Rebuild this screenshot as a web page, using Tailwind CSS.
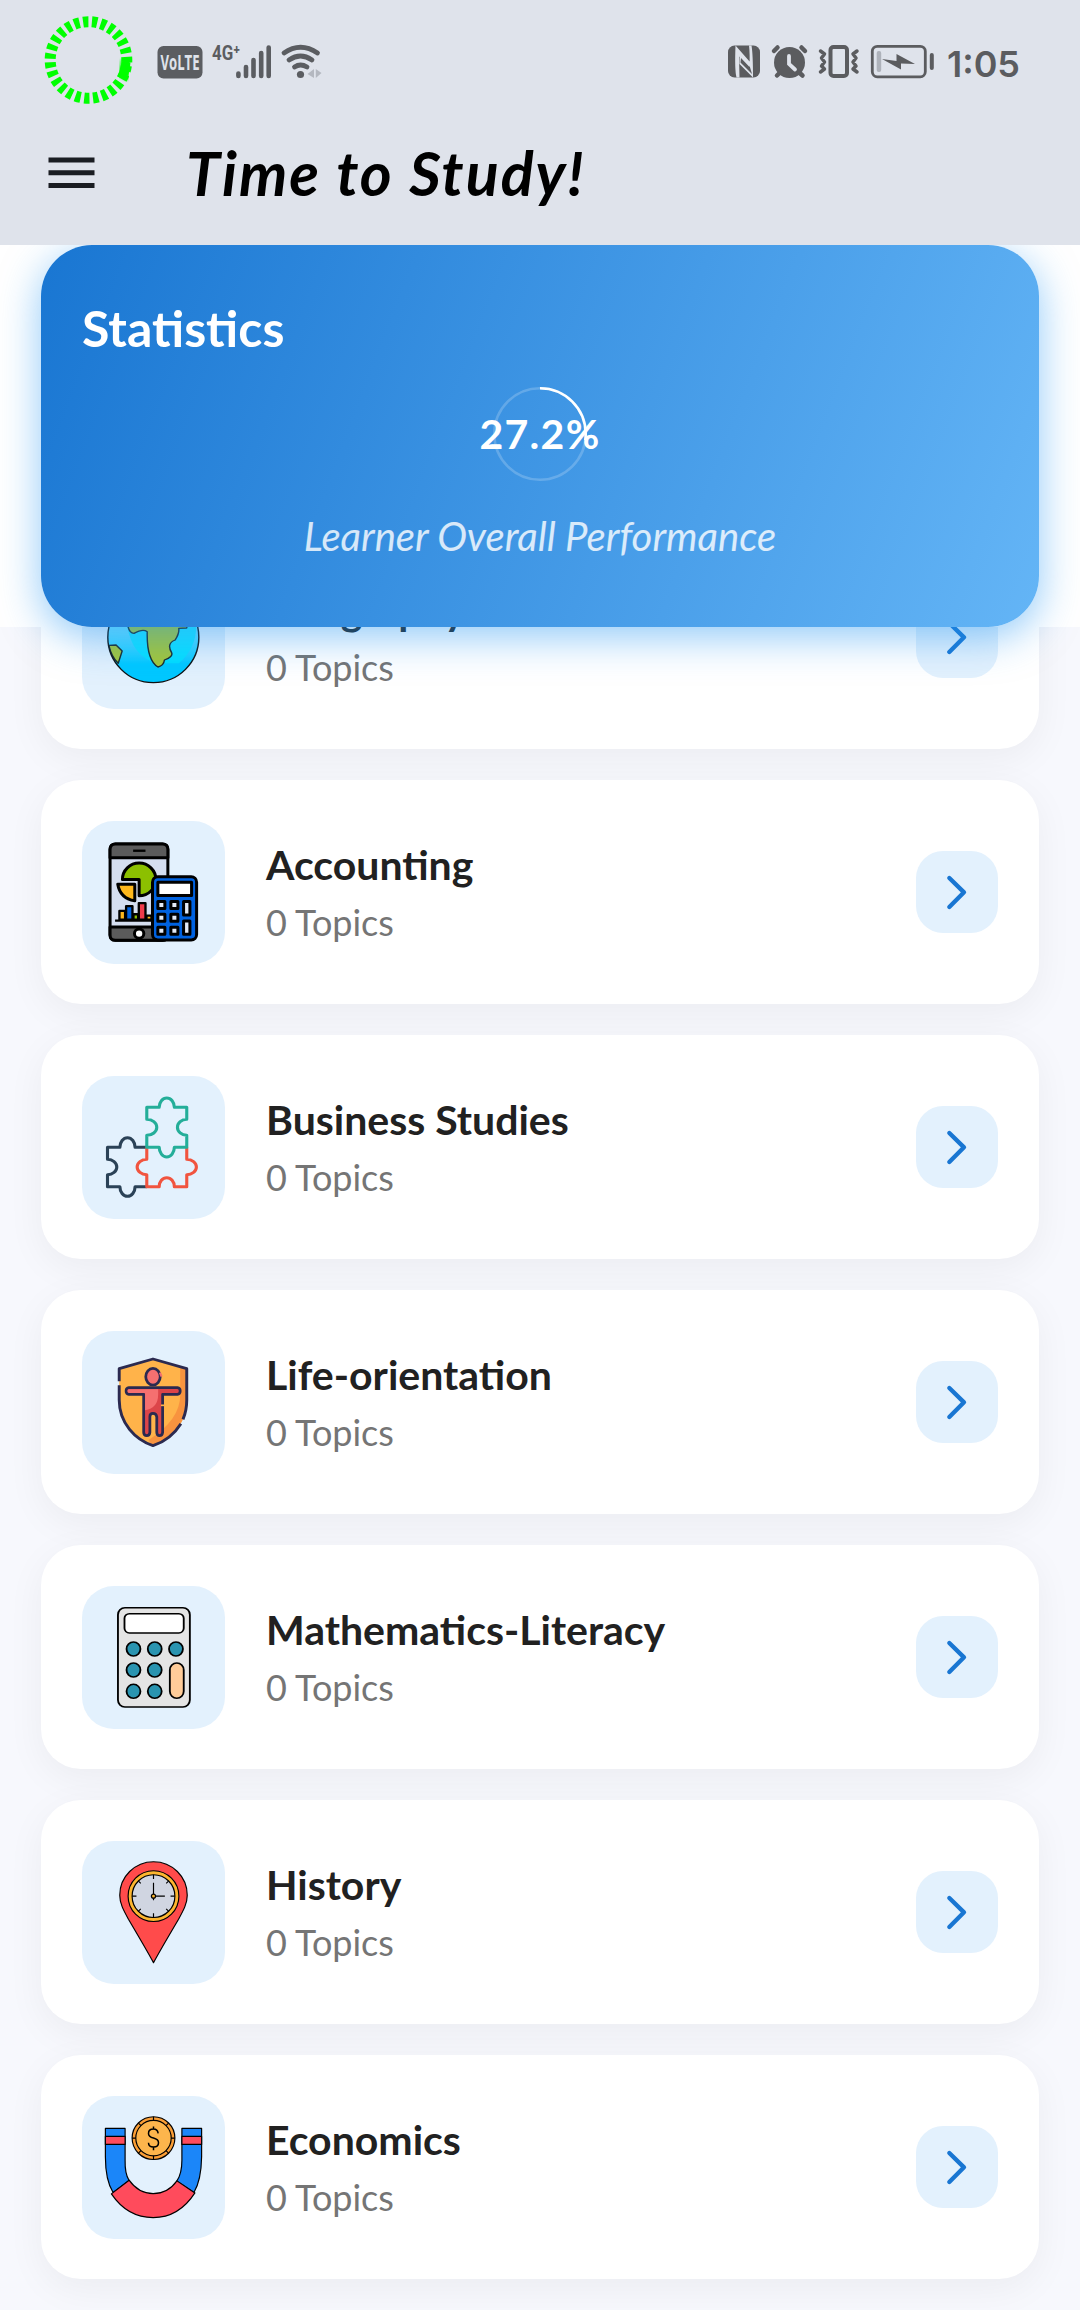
<!DOCTYPE html>
<html lang="en">
<head>
<meta charset="utf-8">
<title>Time to Study!</title>
<script src="https://cdn.jsdelivr.net/npm/@tailwindcss/browser@4"></script>
</head>
<body class="w-[1080px] h-[2310px] overflow-hidden bg-white font-[Lato,sans-serif] flex flex-col">
<svg class="hidden">
  <symbol id="chevron" viewBox="171 348 246 246"><path d="M271 429L315 472L271 516" fill="none" stroke="#1976d2" stroke-width="13" stroke-linecap="round" stroke-linejoin="round"/></symbol>
</svg>

<header class="relative z-20 h-[245px] shrink-0 bg-[#dfe3eb]">
  <div class="flex h-[120px] items-center justify-between">
    <svg class="h-[120px] w-[340px]" viewBox="0 0 340 120">
      <defs><filter id="soft" x="-50%" y="-50%" width="200%" height="200%"><feGaussianBlur stdDeviation="1.6"/></filter></defs>
      <circle cx="88.5" cy="60" r="38.3" fill="none" stroke="#00ff00" stroke-width="11" pathLength="270" stroke-dasharray="6 4" stroke-dashoffset="3.6"/>
      <path d="M126.5 60Q126 70 122 78" fill="none" stroke="#00ff00" stroke-width="11" filter="url(#soft)"/>
      <path d="M126 62Q125.500 70 122.500 76" fill="none" stroke="#00ff00" stroke-width="9"/>
      <rect x="157.500" y="46" width="45" height="32.500" rx="6" fill="#5b5d61"/>
      <text x="160.500" y="69.700" textLength="39" lengthAdjust="spacingAndGlyphs" font-family="Open Sans" font-weight="700" font-size="21" fill="#dfe3eb">VoLTE</text>
      <text x="212" y="60" textLength="28" lengthAdjust="spacingAndGlyphs" font-family="Roboto" font-weight="700" font-size="20" fill="#5b5d61">4G⁺</text>
      <g stroke="#5b5d61" stroke-width="4.600" stroke-linecap="round" fill="none">
        <path d="M238.400 73.500V76M246 67V76M253.500 60V76M261.200 53V76M268.700 47.500V76"/>
        <path d="M284 53Q300.500 41.500 317.500 53M289 60Q300.500 52 312 60M294.500 67Q300.500 63 307 67" stroke-width="4.800"/>
      </g>
      <circle cx="300.500" cy="74.500" r="3.600" fill="#5b5d61"/>
      <path d="M314 69V78L307.500 74ZM315.800 69V78L321.500 73Z" fill="#b4b8c0"/>
    </svg>
    <svg class="h-[120px] w-[360px]" viewBox="720 0 360 120">
      <g fill="#5b5c5f">
        <rect x="728" y="45.500" width="32" height="32" rx="6.500"/>
        <path d="M735.500 45.500L750 62V68L739 56.500L739.500 77.500H736.500Q734.500 70 735.500 45.500ZM749 45.500H751.500Q753 54 753 77.500L739.500 64V55L749.500 65.500Q750 54 749 45.500Z" fill="#dfe3eb"/>
        <path d="M741 58L749.500 67V65.500L752 74L740.500 62.500Z" fill="#5b5c5f"/>
        <circle cx="789.500" cy="62.500" r="15.500"/>
        <path d="M774 51L777.500 47.500M805 51L801.500 47.500M777 75.500L781 71.500M802.500 75.500L798 71.500" stroke="#5b5c5f" stroke-width="4.500" stroke-linecap="round"/>
        <path d="M789 56V64L795 69.500" fill="none" stroke="#dfe3eb" stroke-width="3.800" stroke-linecap="round"/>
      </g>
      <g fill="none" stroke="#5b5c5f" stroke-width="4">
        <rect x="830.500" y="47" width="16.500" height="29" rx="3"/>
        <path d="M820.500 51L824.500 54L821.500 58L824.500 62L821.500 66L824.500 69L820.500 72M857 51L853 54L856 58L853 62L856 66L853 69L857 72" stroke-width="3.500" stroke-linecap="round" stroke-linejoin="round"/>
        <rect x="872.300" y="46.300" width="53" height="30.500" rx="5" stroke-width="2.800"/>
        <path d="M931.800 55V68" stroke-linecap="round"/>
      </g>
      <rect x="876.700" y="51" width="4.500" height="21" rx="2" fill="#aeb2ba"/>
      <path d="M882 59L896.500 61V54L915 64L901 63.500V69.500Z" fill="#5b5c5f"/>
      <text x="947" y="76.500" textLength="73" font-family="Inter" font-weight="600" font-size="36" fill="#5b5c5f">1:05</text>
    </svg>
  </div>
  <div class="flex h-[106px] items-center">
    <svg class="ml-12 h-[32px] w-[47px]" viewBox="0 0 47 32"><path d="M.5 3H46.500M.5 15.700H46.500M.5 28.400H46.500" stroke="#1a1d22" stroke-width="5"/></svg>
    <h1 class="ml-[91px] text-[61px] leading-[80px] font-bold italic tracking-[2px] whitespace-nowrap text-black font-[Lato,cursive]">Time to Study!</h1>
  </div>
</header>

<section class="relative z-10 mx-[41px] flex h-[382px] shrink-0 flex-col rounded-[51px] bg-[linear-gradient(110.950deg,#1976d2,#64b5f6)] px-[41px] pt-[53px] text-white shadow-[0_10px_40px_rgba(33,150,243,0.500)]">
  <h2 class="text-[50px] leading-[60px] font-bold">Statistics</h2>
  <div class="mt-[28px] grid h-[96px] place-items-center">
    <svg class="col-start-1 row-start-1 size-[96px]" viewBox="0 0 96 96">
      <circle cx="48" cy="48" r="45.700" fill="none" stroke="#fff" stroke-opacity=".2" stroke-width="2.600"/>
      <circle cx="48" cy="48" r="45.700" fill="none" stroke="#fff" stroke-width="2.600" pathLength="100" stroke-dasharray="27.200 100" transform="rotate(-90 48 48)"/>
    </svg>
    <span class="col-start-1 row-start-1 text-[41px] leading-[50px] font-bold tracking-[1.300px]">27.2%</span>
  </div>
  <p class="mt-[24px] text-center text-[40px] leading-[60px] italic whitespace-nowrap text-white/80 font-[Lato,cursive]">Learner Overall Performance</p>
</section>

<main class="flex h-[1683px] flex-col gap-[31px] overflow-hidden bg-[#f7f8fd] px-[41px]">
  <article class="-mt-[102px] flex h-[224px] shrink-0 items-center rounded-[40px] bg-white px-[41px] shadow-[0_10px_38px_rgba(0,0,0,0.050)]">
    <div class="size-[143px] shrink-0 rounded-[32px] bg-[#e3f1fd]">
      <svg class="size-full" viewBox="230 978 399 429" preserveAspectRatio="none">
        <defs><linearGradient id="sea" x2="0" y2="1"><stop stop-color="#b8f3ff"/><stop offset=".45" stop-color="#60dcff"/><stop offset=".8" stop-color="#00c8ff"/></linearGradient></defs>
        <ellipse cx="429" cy="1192" rx="127" ry="136" fill="url(#sea)"/>
        <path d="M357 1160Q370 1250 440 1270H500Q555 1220 548 1140Z" fill="#00e5ff" opacity=".7"/>
        <g fill="#a4c639" stroke="#1c2a2c" stroke-width="4" stroke-linejoin="round">
          <path d="M357 1150Q360 1180 375 1180Q400 1165 412 1175Q410 1260 442 1281Q458 1277 460 1260Q485 1250 480 1238Q465 1210 490 1200Q502 1180 500 1165L522 1164L530 1130H357Z"/>
          <path d="M305 1216L325 1215L342 1233L331 1270Q312 1250 305 1216Z"/>
        </g>
        <ellipse cx="429" cy="1192" rx="127" ry="136" fill="none" stroke="#111" stroke-width="4"/>
      </svg>
    </div>
    <div class="ml-[41px] flex-1">
      <h3 class="text-[41px] leading-[52px] font-bold text-[#212121]">Geography</h3>
      <p class="mt-2 text-[36px] leading-[46px] text-[#757575]">0 Topics</p>
    </div>
    <div class="size-[82px] rounded-[27px] bg-[#e3f1fd]"><svg class="size-full"><use href="#chevron"/></svg></div>
  </article>

  <article class="flex h-[224px] shrink-0 items-center rounded-[40px] bg-white px-[41px] shadow-[0_10px_38px_rgba(0,0,0,0.050)]">
    <div class="size-[143px] shrink-0 rounded-[32px] bg-[#e3f1fd]">
      <svg class="size-full" viewBox="36 33 428 428">
        <g stroke="#000" stroke-width="9" stroke-linejoin="round">
          <rect x="120" y="102" width="173" height="288" rx="16" fill="#d5def0"/>
          <path d="M120 143V118Q120 102 136 102H277Q293 102 293 118V143Z" fill="#5b5b5b"/>
          <path d="M120 350V374Q120 390 136 390H277Q293 390 293 374V350Z" fill="#5b5b5b"/>
          <path d="M189 122H226" stroke-width="7"/>
          <path d="M157 208A50 49 0 1 1 207 257V208Z" fill="#8cc000"/>
          <path d="M143 222H194V272Q150 264 143 222Z" fill="#ffb81c"/>
          <path d="M135 331H245" stroke-width="7"/>
          <g stroke-width="7"><path d="M148 328V302H165V328Z" fill="#ffb81c"/><path d="M168 328V288H187V328Z" fill="#0062e0"/><path d="M190 328V312H204V328Z" fill="#8cc000"/><path d="M206 328V279H226V328Z" fill="#f03a4a"/><path d="M229 328V316H244V328Z" fill="#ffb81c"/></g>
          <circle cx="207" cy="370" r="14" fill="#fff"/>
          <rect x="247" y="200" width="132" height="189" rx="16" fill="#0062e0"/>
          <rect x="263" y="216" width="101" height="40" fill="#fff"/>
          <g fill="#e3eaf6"><path d="M263 274h21v21h-21ZM302 274h21v21h-21ZM263 312h21v21h-21ZM302 312h21v21h-21ZM263 351h21v21h-21ZM302 351h21v21h-21ZM340 274h19v40h-19ZM340 332h19v40h-19Z"/></g>
        </g>
      </svg>
    </div>
    <div class="ml-[41px] flex-1">
      <h3 class="text-[41px] leading-[52px] font-bold text-[#212121]">Accounting</h3>
      <p class="mt-2 text-[36px] leading-[46px] text-[#757575]">0 Topics</p>
    </div>
    <div class="size-[82px] rounded-[27px] bg-[#e3f1fd]"><svg class="size-full"><use href="#chevron"/></svg></div>
  </article>

  <article class="flex h-[224px] shrink-0 items-center rounded-[40px] bg-white px-[41px] shadow-[0_10px_38px_rgba(0,0,0,0.050)]">
    <div class="size-[143px] shrink-0 rounded-[32px] bg-[#e3f1fd]">
      <svg class="size-full" viewBox="35 33 415 429" preserveAspectRatio="none">
        <g fill="none" stroke-width="9" stroke-linejoin="round">
          <path d="M223 247H189A22 29 0 1 0 145 247H109V283A27 23 0 0 1 109 329V365H145A22 29 0 1 0 189 365H223" stroke="#2b4257"/>
          <path d="M223 247V283A28 23 0 1 0 223 329V365H259A22 27 0 0 1 303 365H339V329A28 23 0 1 0 339 283V247" stroke="#f1543f"/>
          <path d="M223 127H259A22 28 0 1 1 303 127H339V163A27 24 0 0 0 339 211V247H303A22 29 0 1 1 259 247H223V211A29 24 0 0 0 223 163Z" stroke="#24ae99"/>
        </g>
      </svg>
    </div>
    <div class="ml-[41px] flex-1">
      <h3 class="text-[41px] leading-[52px] font-bold text-[#212121]">Business Studies</h3>
      <p class="mt-2 text-[36px] leading-[46px] text-[#757575]">0 Topics</p>
    </div>
    <div class="size-[82px] rounded-[27px] bg-[#e3f1fd]"><svg class="size-full"><use href="#chevron"/></svg></div>
  </article>

  <article class="flex h-[224px] shrink-0 items-center rounded-[40px] bg-white px-[41px] shadow-[0_10px_38px_rgba(0,0,0,0.050)]">
    <div class="size-[143px] shrink-0 rounded-[32px] bg-[#e3f1fd]">
      <svg class="size-full" viewBox="35 33 415 429" preserveAspectRatio="none">
        <path d="M143 146L241 117L339 146V240C339 310 295 359 241 377C190 359 143 310 143 240Z" fill="#ffb34a"/>
        <path d="M320 140L339 146V240C339 310 295 359 241 377Q232 371 228 360Q320 300 320 225Z" fill="#f8933f"/>
        <path d="M143 184V146L241 117L339 146V240Q339 272 328 298M322 311Q293 359 241 377C190 359 143 310 143 240V196" fill="none" stroke="#2b2a50" stroke-width="8.500" stroke-linejoin="round"/>
        <g stroke="#2b2a50" stroke-width="8" stroke-linejoin="round">
          <ellipse cx="241" cy="170" rx="21" ry="25" fill="#f57070"/>
          <path d="M171 203H312Q320 204 320 213Q320 222 312 223H269V337Q268 347 260 347Q252 347 252 337V290Q250 280 241 280Q232 280 232 290V337Q231 347 223 347Q214 347 214 337V223H171Q163 222 163 213Q163 204 171 203Z" fill="#dc4549"/>
        </g>
        <path d="M256 208V223Q256 265 218 271V219H171Q167 217 167 213T171 208Z" fill="#f57070"/>
        <path d="M261 158L266 170" stroke="#f57070" stroke-width="6"/>
        <path d="M264 256H274" stroke="#ffb34a" stroke-width="5"/>
      </svg>
    </div>
    <div class="ml-[41px] flex-1">
      <h3 class="text-[41px] leading-[52px] font-bold text-[#212121]">Life-orientation</h3>
      <p class="mt-2 text-[36px] leading-[46px] text-[#757575]">0 Topics</p>
    </div>
    <div class="size-[82px] rounded-[27px] bg-[#e3f1fd]"><svg class="size-full"><use href="#chevron"/></svg></div>
  </article>

  <article class="flex h-[224px] shrink-0 items-center rounded-[40px] bg-white px-[41px] shadow-[0_10px_38px_rgba(0,0,0,0.050)]">
    <div class="size-[143px] shrink-0 rounded-[32px] bg-[#e3f1fd]">
      <svg class="size-full" viewBox="28 33 350 429" preserveAspectRatio="none">
        <g stroke="#000" stroke-width="4.500">
          <rect x="116" y="98" width="176" height="298" rx="17" ry="21" fill="#e4e4e4"/>
          <rect x="132" y="116" width="145" height="58" rx="12" ry="14" fill="#fff"/>
          <g fill="#2a94b0"><ellipse cx="154" cy="222" rx="17" ry="21"/><ellipse cx="206" cy="222" rx="17" ry="21"/><ellipse cx="258" cy="222" rx="17" ry="21"/><ellipse cx="154" cy="285" rx="17" ry="21"/><ellipse cx="206" cy="285" rx="17" ry="21"/><ellipse cx="154" cy="349" rx="17" ry="21"/><ellipse cx="206" cy="349" rx="17" ry="21"/></g>
          <rect x="243" y="264" width="34" height="106" rx="17" ry="21" fill="#ffcc99"/>
        </g>
      </svg>
    </div>
    <div class="ml-[41px] flex-1">
      <h3 class="text-[41px] leading-[52px] font-bold text-[#212121]">Mathematics-Literacy</h3>
      <p class="mt-2 text-[36px] leading-[46px] text-[#757575]">0 Topics</p>
    </div>
    <div class="size-[82px] rounded-[27px] bg-[#e3f1fd]"><svg class="size-full"><use href="#chevron"/></svg></div>
  </article>

  <article class="flex h-[224px] shrink-0 items-center rounded-[40px] bg-white px-[41px] shadow-[0_10px_38px_rgba(0,0,0,0.050)]">
    <div class="size-[143px] shrink-0 rounded-[32px] bg-[#e3f1fd]">
      <svg class="size-full" viewBox="36 33 428 428">
        <g stroke="#000" stroke-width="3.500" stroke-linejoin="round">
          <path d="M250 397Q230 360 175 267C160 240 149 220 149 195A101 100 0 0 1 351 195C351 220 340 240 325 267Q270 360 250 397Z" fill="#ff4b4b"/>
          <circle cx="250" cy="198" r="76" fill="#fdb62f"/>
          <circle cx="250" cy="198" r="64" fill="#d0d5e1"/>
          <path d="M250 134V147M250 249V262M186 198H199M301 198H314M205 153L212 160M295 153L288 160M205 243L212 236M295 243L288 236M250 158V210M242 198H284" fill="none"/>
          <circle cx="250" cy="198" r="6" fill="#fdb62f"/>
        </g>
      </svg>
    </div>
    <div class="ml-[41px] flex-1">
      <h3 class="text-[41px] leading-[52px] font-bold text-[#212121]">History</h3>
      <p class="mt-2 text-[36px] leading-[46px] text-[#757575]">0 Topics</p>
    </div>
    <div class="size-[82px] rounded-[27px] bg-[#e3f1fd]"><svg class="size-full"><use href="#chevron"/></svg></div>
  </article>

  <article class="flex h-[224px] shrink-0 items-center rounded-[40px] bg-white px-[41px] shadow-[0_10px_38px_rgba(0,0,0,0.050)]">
    <div class="size-[143px] shrink-0 rounded-[32px] bg-[#e3f1fd]">
      <svg class="size-full" viewBox="36 33 428 428">
        <g stroke="#000" stroke-width="3.500" stroke-linejoin="round">
          <path d="M106 130H165V225Q164 265 177 286L129 322Q106 285 106 215Z" fill="#1b86f9"/>
          <path d="M335 130H394V215Q393 285 371 322L320 287Q335 265 335 225Z" fill="#1b86f9"/>
          <path d="M106 154H165V178H106ZM335 154H394V178H335Z" fill="#ff4b5c"/>
          <path d="M177 285Q205 325 249 325T320 287L374 323Q326 397 249 397T124 326Z" fill="#ff4b5c"/>
          <circle cx="250" cy="159" r="64" fill="#fb9e35"/>
          <path d="M250 95V223M186 159H314M205 114L295 204M205 204L295 114"/>
          <circle cx="250" cy="159" r="53" fill="#fdb54c"/>
          <path d="M264 145Q262 132 250 132Q235 132 235 145Q235 155 250 159Q265 163 265 173Q265 186 250 186Q235 186 235 173M250 124V132M250 186V195" fill="none" stroke-width="4.500"/>
        </g>
      </svg>
    </div>
    <div class="ml-[41px] flex-1">
      <h3 class="text-[41px] leading-[52px] font-bold text-[#212121]">Economics</h3>
      <p class="mt-2 text-[36px] leading-[46px] text-[#757575]">0 Topics</p>
    </div>
    <div class="size-[82px] rounded-[27px] bg-[#e3f1fd]"><svg class="size-full"><use href="#chevron"/></svg></div>
  </article>
</main>
</body>
</html>
